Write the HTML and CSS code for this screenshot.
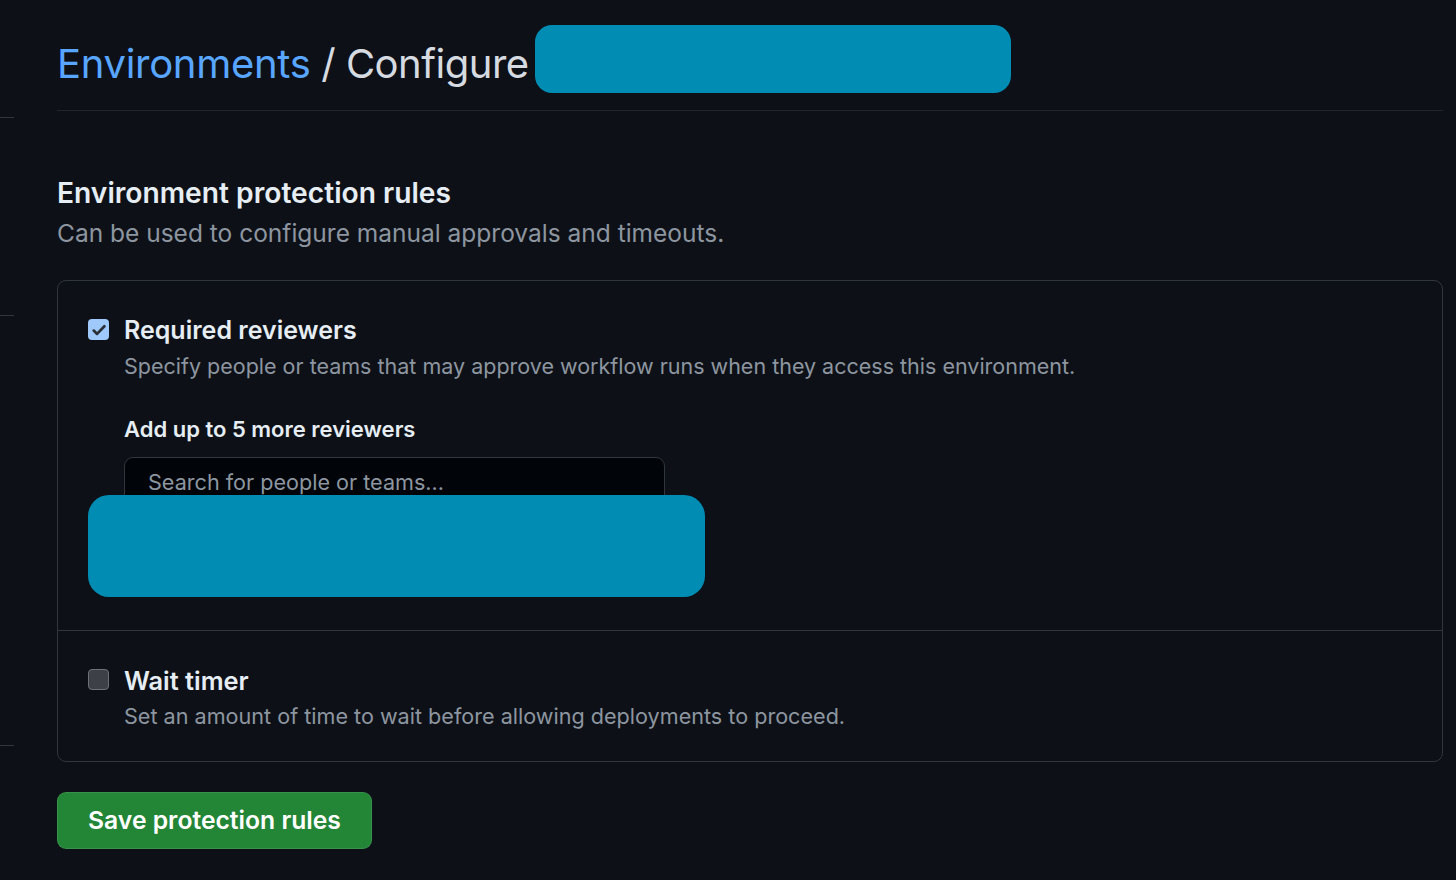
FILE: index.html
```html
<!DOCTYPE html>
<html lang="en">
<head>
<meta charset="utf-8">
<title>Environments / Configure</title>
<link rel="stylesheet" href="styles.css">
</head>
<body>
<div class="layout">
  <aside class="sidebar">
    <div class="side-rule side-rule-1"></div>
    <div class="side-rule side-rule-2"></div>
    <div class="side-rule side-rule-3"></div>
  </aside>
  <main class="main">
    <header class="page-head">
      <h1 class="page-title"><a class="crumb" href="#">Environments</a> / Configure</h1>
      <div class="redact redact-title"></div>
    </header>

    <section class="rules">
      <h2 class="rules-title">Environment protection rules</h2>
      <p class="rules-desc">Can be used to configure manual approvals and timeouts.</p>

      <div class="rules-box">
        <div class="rule rule-reviewers">
          <span class="check check-on">
            <svg viewBox="0 0 16 16" width="18" height="18"><path d="M3.3 8.5l3 3 6.5-6.8" fill="none" stroke="#2b3037" stroke-width="2.4" stroke-linecap="round" stroke-linejoin="round"/></svg>
          </span>
          <div class="rule-body">
            <div class="rule-name">Required reviewers</div>
            <div class="rule-note">Specify people or teams that may approve workflow runs when they access this environment.</div>
            <div class="reviewers">
              <div class="reviewers-label">Add up to 5 more reviewers</div>
              <div class="search">Search for people or teams...</div>
            </div>
          </div>
          <div class="redact redact-list"></div>
        </div>

        <div class="rule rule-timer">
          <span class="check check-off"></span>
          <div class="rule-body">
            <div class="rule-name">Wait timer</div>
            <div class="rule-note">Set an amount of time to wait before allowing deployments to proceed.</div>
          </div>
        </div>
      </div>

      <button class="btn-save" type="button">Save protection rules</button>
    </section>
  </main>
</div>
</body>
</html>
```

FILE: styles.css
```css
* { box-sizing: border-box; }
html, body {
  margin: 0;
  padding: 0;
  background: #0d1117;
  color: #e6edf3;
  font-family: Inter, "Noto Sans", "Liberation Sans", sans-serif;
  height: 100%;
  overflow: hidden;
}
.layout {
  display: flex;
  gap: 43px;
  height: 880px;
}
.sidebar {
  width: 14px;
  flex: none;
  display: flex;
  flex-direction: column;
}
.side-rule { height: 1px; background: #30363d; }
.side-rule-1 { margin-top: 117px; }
.side-rule-2 { margin-top: 197px; }
.side-rule-3 { margin-top: 429px; }

.main {
  flex: 1;
  padding-right: 13px;
}
.page-head {
  display: flex;
  align-items: center;
  gap: 6px;
  margin-top: 25px;
  padding-bottom: 17px;
  border-bottom: 1px solid #21262d;
}
.page-title {
  margin: 0;
  padding-top: 8px;
  font-size: 40px;
  font-weight: 400;
  color: #d6dbe1;
  letter-spacing: -0.5px;
}
.crumb { color: #58a6ff; text-decoration: none; letter-spacing: -0.3px; }
.redact {
  background: #018cb4;
}
.redact-title {
  width: 476px;
  height: 68px;
  border-radius: 17px;
}

.rules { padding-top: 64px; }
.rules-title {
  margin: 0;
  font-size: 28.2px;
  font-weight: 600;
  line-height: 36px;
  color: #e6edf3;
}
.rules-desc {
  margin: 6px 0 0;
  font-size: 24.5px;
  line-height: 32px;
  color: #8d96a0;
}
.rules-box {
  margin-top: 31px;
  border: 1px solid #30363d;
  border-radius: 9px;
}
.rule {
  display: grid;
  grid-template-columns: 21px 1fr;
  column-gap: 15px;
  padding: 0 29px 0 30px;
  position: relative;
}
.rule-reviewers {
  padding-top: 37px;
  height: 350px;
  border-bottom: 1px solid #30363d;
}
.rule-timer {
  padding-top: 37px;
  padding-bottom: 30px;
}
.check {
  width: 21px;
  height: 21px;
  border-radius: 4px;
  display: flex;
  align-items: center;
  justify-content: center;
  margin-top: 1px;
}
.check-on { background: #9ec9fa; }
.check-off { background: #3d4046; border: 1.5px solid #6b7079; }
.rule-name {
  font-size: 25px;
  font-weight: 600;
  line-height: 26px;
  margin-top: -1px;
  color: #e6edf3;
}
.rule-timer .rule-name { font-size: 25.4px; margin-top: 0; }
.rule-note {
  margin-top: 8px;
  font-size: 21.5px;
  line-height: 30px;
  color: #8d96a0;
}
.rule-timer .rule-note { font-size: 21.6px; margin-top: 7px; }
.reviewers { margin-top: 33px; }
.reviewers-label {
  font-size: 22px;
  font-weight: 600;
  line-height: 30px;
  color: #e6edf3;
}
.search {
  margin-top: 13px;
  width: 541px;
  height: 52px;
  padding: 9px 23px 0;
  background: #010409;
  border: 1px solid #30363d;
  border-radius: 9px;
  font-size: 21.6px;
  line-height: 30px;
  color: #8d96a0;
}
.redact-list {
  position: absolute;
  left: 30px;
  top: 214px;
  width: 617px;
  height: 102px;
  border-radius: 21px;
}

.btn-save {
  margin-top: 30px;
  width: 315px;
  height: 57px;
  background: #238636;
  border: 1px solid rgba(240, 246, 252, 0.1);
  border-radius: 9px;
  color: #ffffff;
  font-family: inherit;
  font-size: 24.7px;
  font-weight: 600;
  padding: 0 0 2px;
  cursor: pointer;
}
```
